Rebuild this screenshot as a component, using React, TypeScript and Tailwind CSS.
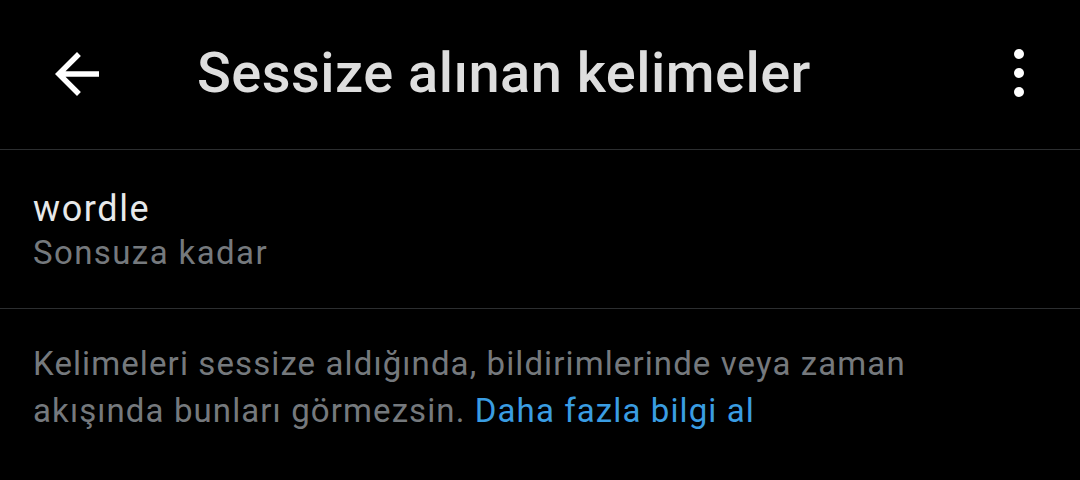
export default function App() {
  return (
    <div
      className="w-[1080px] h-[480px] bg-black overflow-hidden"
      style={{ fontFamily: "Roboto, 'Noto Sans', sans-serif" }}
    >
      {/* top bar */}
      <div className="flex items-center h-[150px] border-b border-[#2c2e30]">
        <svg
          viewBox="0 0 24 24"
          className="w-[66px] h-[66px] ml-[44px] mb-[2px] shrink-0"
          fill="#ffffff"
        >
          <path d="M20 11H7.83l5.59-5.59L12 4l-8 8 8 8 1.41-1.41L7.83 13H20v-2z" />
        </svg>
        <h1 className="ml-[87px] mb-[4px] text-[56px] font-medium leading-none tracking-[0.45px] text-[#dedede]">
          Sessize alınan kelimeler
        </h1>
        <div className="ml-auto mr-[56px] mb-[3px] flex flex-col gap-[9px]">
          <span className="block w-[10px] h-[10px] rounded-full bg-white" />
          <span className="block w-[10px] h-[10px] rounded-full bg-white" />
          <span className="block w-[10px] h-[10px] rounded-full bg-white" />
        </div>
      </div>

      {/* muted word */}
      <div className="h-[159px] border-b border-[#2c2e30] px-[33px] pt-[38px]">
        <div className="text-[36px] leading-[43px] tracking-[1.6px] text-[#e7e9ea]">wordle</div>
        <div className="text-[33px] leading-[43px] tracking-[1.4px] text-[#75797d]">
          Sonsuza kadar
        </div>
      </div>

      {/* info */}
      <p className="px-[33px] pt-[31px] text-[33px] leading-[47px] tracking-[1.1px] text-[#75797d]">
        Kelimeleri sessize aldığında, bildirimlerinde veya zaman
        <br />
        akışında bunları görmezsin.{" "}
        <span className="text-[#3a9de2]">Daha fazla bilgi al</span>
      </p>
    </div>
  );
}
